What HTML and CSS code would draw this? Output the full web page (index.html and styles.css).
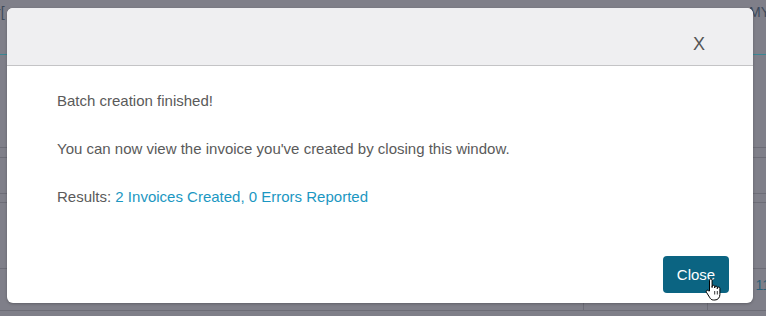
FILE: index.html
```html
<!DOCTYPE html>
<html>
<head>
  <title>Batch Creation</title>
  <link rel="stylesheet" href="styles.css">
</head>
<body>
  <div class="backdrop">
    <div class="row row-head"><span class="cell-text left">r[</span><span class="cell-text right">MY</span></div>
    <div class="row row-a"></div>
    <div class="row row-b"></div>
    <div class="row row-c"></div>
    <div class="row row-d"></div>
    <div class="row row-e"></div>
    <div class="row row-f"><span class="vline v1"></span><span class="vline v2"></span><span class="cell-text right num">11</span></div>
  </div>

  <div class="modal">
    <div class="modal-header">
      <span class="close-x">X</span>
    </div>
    <div class="modal-body">
      <p>Batch creation finished!</p>
      <p>You can now view the invoice you've created by closing this window.</p>
      <p>Results: <a href="#" class="result-link">2 Invoices Created, 0 Errors Reported</a></p>
    </div>
    <div class="modal-footer">
      <button class="btn-close">Close</button>
    </div>
  </div>

  <!-- mouse pointer over the button -->
  <svg class="pointer" width="18" height="23" viewBox="0 0 18 23">
    <path d="M4.5 13 V2.2 a1.3 1.3 0 0 1 2.6 0 V9.5 V8.6 a1.3 1.3 0 0 1 2.6 0 V10 V9.4 a1.3 1.3 0 0 1 2.6 0 V10.8 V10.4 a1.3 1.3 0 0 1 2.6 0 V16.5 c0 3 -2 5.5 -5 5.5 H8.5 c-2 0 -3 -1 -4 -2.8 L1.4 14.2 a1.3 1.3 0 0 1 2.2 -1.4 Z" fill="#fff" stroke="#000" stroke-width="1"/>
    <path d="M9.7 13 V16.5 M12.3 13 V16.5" stroke="#000" stroke-width="0.8"/>
  </svg>
</body>
</html>
```

FILE: styles.css
```css
body {
  margin: 0;
  width: 766px;
  height: 316px;
  overflow: hidden;
  background-color: #7f7f89;
  font-family: "Liberation Sans", Arial, sans-serif;
  position: relative;
}

.backdrop {
  display: flex;
  flex-direction: column;
}

.row {
  position: relative;
  border-bottom: 1px solid #6d6d77;
}

.row-head {
  height: 54px;
  border-bottom: 1px solid #3a8794;
}

.row-a { height: 92px; }
.row-b { height: 9px; }
.row-c { height: 35px; }
.row-d { height: 8px; }
.row-e { height: 65px; }
.row-f { height: 41px; }

.cell-text {
  position: absolute;
  top: 4px;
  font-size: 14px;
  color: #3d4a5c;
}

.cell-text.left { left: -4px; }
.cell-text.right { right: -4px; }
.cell-text.num { top: 8px; color: #2d5f78; }

.vline {
  position: absolute;
  top: 0;
  bottom: 0;
  width: 1px;
  background-color: #6d6d77;
}

.v1 { left: 583px; }
.v2 { left: 707px; }

.modal {
  position: absolute;
  left: 7px;
  top: 8px;
  width: 746px;
  height: 295px;
  background-color: #fff;
  border-radius: 6px;
  box-shadow: 0 1px 3px rgba(0, 0, 0, 0.25);
  display: flex;
  flex-direction: column;
  overflow: hidden;
}

.modal-header {
  height: 58px;
  box-sizing: border-box;
  background-color: #efeff1;
  border-bottom: 1px solid #c4c4c6;
  display: flex;
  justify-content: flex-end;
  align-items: flex-end;
  padding: 0 48px 11px 0;
}

.close-x {
  font-size: 18px;
  color: #555;
  line-height: 20px;
}

.modal-body {
  flex: 1;
  padding: 25px 50px 0 50px;
  color: #5a5a5a;
  font-size: 15px;
}

.modal-body p {
  margin: 0 0 28px 0;
  line-height: 20px;
}

.result-link {
  color: #1b97c2;
  text-decoration: none;
}

.modal-footer {
  display: flex;
  justify-content: flex-end;
  padding: 0 24px 10px 0;
}

.btn-close {
  width: 66px;
  height: 37px;
  background-color: #0b6482;
  color: #fff;
  border: none;
  border-radius: 4px;
  font-family: "Liberation Sans", Arial, sans-serif;
  font-size: 15px;
  padding: 0;
  cursor: pointer;
}

.pointer {
  position: absolute;
  left: 705px;
  top: 278px;
}
```
